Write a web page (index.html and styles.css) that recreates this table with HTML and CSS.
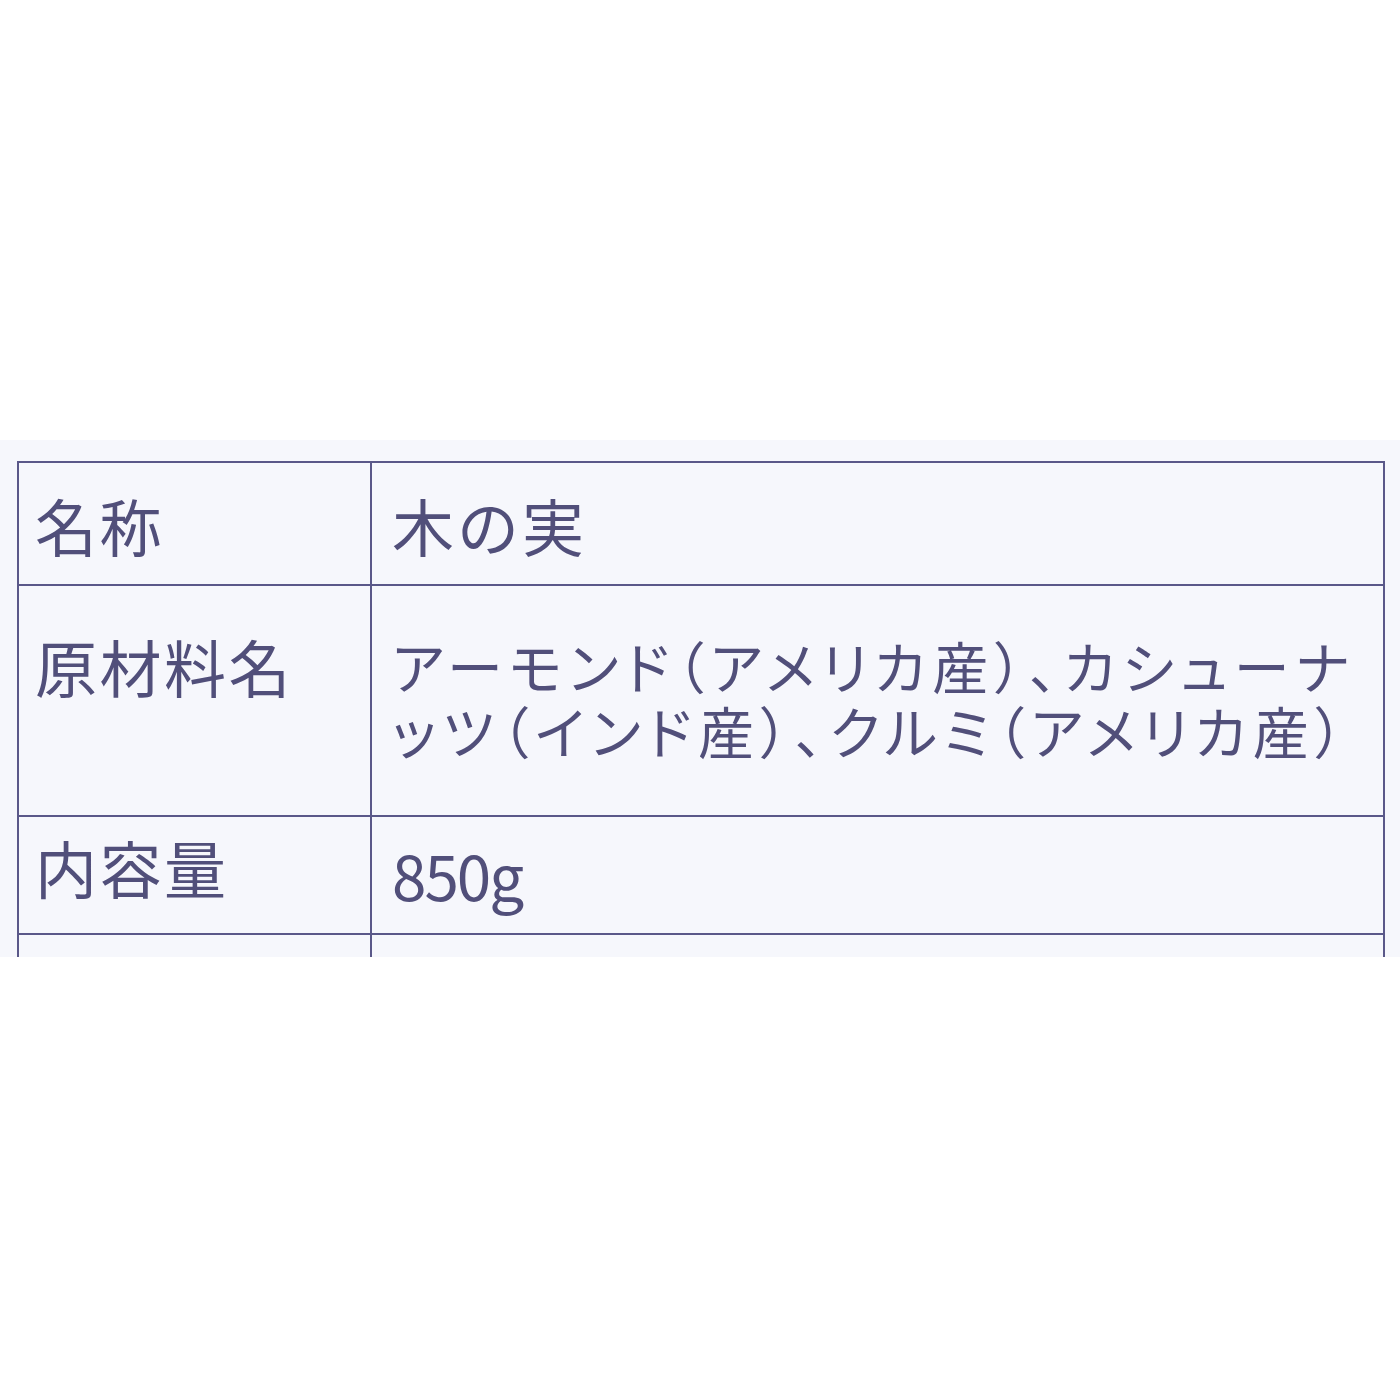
FILE: index.html
```html
<!DOCTYPE html>
<html lang="ja">
<head>
<meta charset="utf-8">
<link rel="stylesheet" href="styles.css">
</head>
<body>
<div class="photo">
  <div class="label">
    <div class="table">
      <div class="cell key row1">名称</div>
      <div class="cell val row1">木の実</div>
      <div class="cell key row2">原材料名</div>
      <div class="cell val row2 ingredients">アーモンド（アメリカ産）、カシューナ<br>ッツ（インド産）、クルミ（アメリカ産）</div>
      <div class="cell key row3">内容量</div>
      <div class="cell val row3 amount">850g</div>
      <div class="cell key row4"></div>
      <div class="cell val row4"></div>
    </div>
  </div>
</div>
</body>
</html>
```
FILE: styles.css
```css
html, body {
  margin: 0;
  padding: 0;
  background: #ffffff;
}

.photo {
  width: 1400px;
  height: 1400px;
  padding-top: 440px;
  box-sizing: border-box;
}

.label {
  height: 517px;
  background: #f6f7fc;
  overflow: hidden;
  padding: 21px 0 0 17px;
  box-sizing: border-box;
}

.table {
  width: 1368px;
  display: grid;
  grid-template-columns: 353px 1fr;
  border-top: 2px solid #5a5889;
  border-left: 2px solid #5a5889;
  border-right: 2px solid #5a5889;
  box-sizing: border-box;
  font-family: "Noto Sans CJK JP", "Noto Sans", sans-serif;
  color: #514f7a;
}

.cell {
  border-bottom: 2px solid #5a5889;
  box-sizing: border-box;
  line-height: 1;
  font-size: 62px;
}

.key {
  border-right: 2px solid #5a5889;
  padding-left: 16px;
  letter-spacing: 2.5px;
}

.val {
  padding-left: 20px;
}

.row1 {
  height: 123px;
  padding-top: 31px;
}

.row1.val {
  letter-spacing: 3px;
}

.row2 {
  height: 231px;
  padding-top: 49px;
}

.ingredients {
  font-size: 56px;
  line-height: 65px;
  padding-top: 46px;
  font-feature-settings: "palt" 1;
  letter-spacing: 6.5px;
}

.row3 {
  height: 118px;
  padding-top: 19px;
}

.amount {
  padding-top: 26px;
  letter-spacing: -2px;
}

.row4 {
  height: 60px;
}
```
